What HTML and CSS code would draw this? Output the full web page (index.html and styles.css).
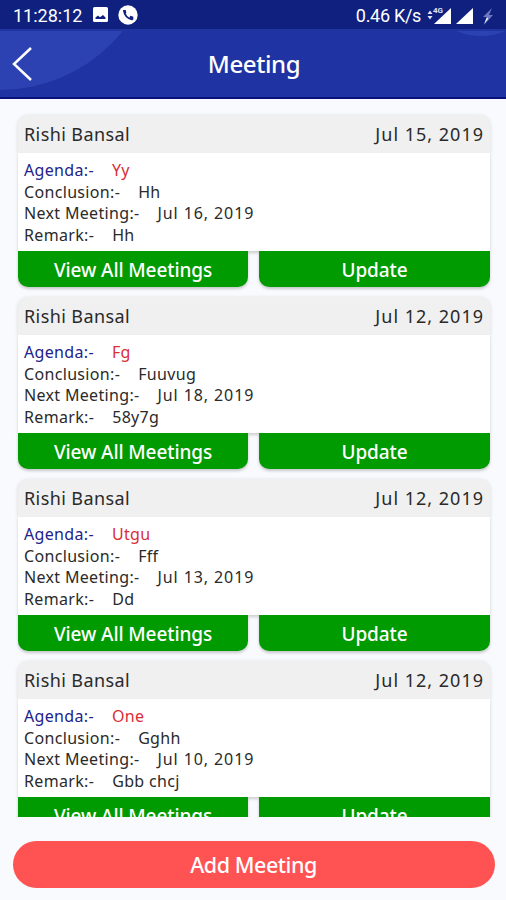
FILE: index.html
```
<!DOCTYPE html>
<html lang="en">
  <head>
    <meta charset="UTF-8" />
    <title>Meeting</title>
    <link rel="stylesheet" href="styles.css">
  </head>
  <body>
    <header>
      <svg class="header-bg" viewBox="0 0 506 99">
        <circle cx="0" cy="-67" r="157" />
        <circle cx="481" cy="-29" r="65" />
      </svg>
      <div class="status-bar">
        <span class="clock">11:28:12</span>
        <svg class="photo" width="15" height="15" viewBox="0 0 15 15">
          <rect width="15" height="15" rx="1.5" fill="#fff" />
          <path d="M2.500 12V10.500L5 8.500l2 1.800 3-2.300 2.500 2.500V12z" fill="#10207f" />
        </svg>
        <svg class="call" width="20" height="20" viewBox="0 0 20 20">
          <circle cx="10" cy="10" r="9.7" fill="#fff" />
          <path d="M6 5.2c.3 4.5 3.500 8.300 8.500 9.300" fill="none" stroke="#10207f" stroke-width="1.800" />
          <path d="M5 5h2.800l.5 3-2 1zM11.300 12.300l1.200-1.500 2.800 1v3h-2z" fill="#10207f" />
        </svg>
        <span class="speed">0.46 K/s</span>
        <svg class="signal" width="70" height="20" viewBox="0 0 70 20">
          <path d="M1.500 9 4 5.500 6.500 9zM1.500 11h5L4 14.500z" fill="#dfe3f6" />
          <path d="M25 3v16H8zM47 3v16H30z" fill="#fff" />
          <text x="7" y="8">4G</text>
          <path d="m66 3-9 9h4l-3 8 9-10h-4z" fill="#6d79c0" />
          <path d="m61 12-3 7 4-5z" fill="#fff" />
        </svg>
      </div>
      <div class="title-bar">
        <svg class="back" width="22" height="36" viewBox="0 0 22 36">
          <path d="M19 2 2 18l17 16" fill="none" stroke="#fff" stroke-width="2.500" />
        </svg>
        <h1>Meeting</h1>
      </div>
    </header>

    <div class="list">
      <div class="card">
        <div class="card-head"><span>Rishi Bansal</span><span class="date">Jul 15, 2019</span></div>
        <div class="card-body">
          <p class="agenda"><span class="label">Agenda:-</span><span>Yy</span></p>
          <p><span class="label">Conclusion:-</span><span>Hh</span></p>
          <p><span class="label">Next Meeting:-</span><span class="next">Jul 16, 2019</span></p>
          <p><span class="label">Remark:-</span><span>Hh</span></p>
        </div>
        <div class="actions"><button>View All Meetings</button><button>Update</button></div>
      </div>
      <div class="card">
        <div class="card-head"><span>Rishi Bansal</span><span class="date">Jul 12, 2019</span></div>
        <div class="card-body">
          <p class="agenda"><span class="label">Agenda:-</span><span>Fg</span></p>
          <p><span class="label">Conclusion:-</span><span>Fuuvug</span></p>
          <p><span class="label">Next Meeting:-</span><span class="next">Jul 18, 2019</span></p>
          <p><span class="label">Remark:-</span><span>58y7g</span></p>
        </div>
        <div class="actions"><button>View All Meetings</button><button>Update</button></div>
      </div>
      <div class="card">
        <div class="card-head"><span>Rishi Bansal</span><span class="date">Jul 12, 2019</span></div>
        <div class="card-body">
          <p class="agenda"><span class="label">Agenda:-</span><span>Utgu</span></p>
          <p><span class="label">Conclusion:-</span><span>Fff</span></p>
          <p><span class="label">Next Meeting:-</span><span class="next">Jul 13, 2019</span></p>
          <p><span class="label">Remark:-</span><span>Dd</span></p>
        </div>
        <div class="actions"><button>View All Meetings</button><button>Update</button></div>
      </div>
      <div class="card">
        <div class="card-head"><span>Rishi Bansal</span><span class="date">Jul 12, 2019</span></div>
        <div class="card-body">
          <p class="agenda"><span class="label">Agenda:-</span><span>One</span></p>
          <p><span class="label">Conclusion:-</span><span>Gghh</span></p>
          <p><span class="label">Next Meeting:-</span><span class="next">Jul 10, 2019</span></p>
          <p><span class="label">Remark:-</span><span>Gbb chcj</span></p>
        </div>
        <div class="actions"><button>View All Meetings</button><button>Update</button></div>
      </div>
    </div>

    <button class="add">Add Meeting</button>
  </body>
</html>
```
FILE: styles.css
```
* {
  box-sizing: border-box;
}
body {
  margin: 0;
  height: 900px;
  overflow: hidden;
  display: flex;
  flex-direction: column;
  background: #f9fafe;
  color: #2a2a2a;
  font-family: "Noto Sans", "Open Sans", sans-serif;
}
header {
  position: relative;
  height: 99px;
  background: #2033a2;
  border-bottom: 2px solid #07107c;
  color: white;
}
.header-bg {
  position: absolute;
  top: 0;
  left: 0;
  width: 506px;
  height: 99px;
  fill: #2d42b2;
}
.status-bar {
  position: relative;
  display: flex;
  align-items: center;
  height: 31px;
  padding: 0 10px 0 13px;
  background: #10207f;
  border-bottom: 2px solid #2034a0;
  font-family: Roboto, sans-serif;
  font-size: 18px;
}
.clock {
  width: 80px;
  padding-top: 2px;
}
.call {
  margin-left: 10px;
}
.speed {
  margin-left: auto;
  margin-right: 5px;
  padding-top: 2px;
  letter-spacing: -0.3px;
}
.signal text {
  font-size: 8px;
  font-weight: bold;
  fill: #dfe3f6;
}
.title-bar {
  position: relative;
  height: 66px;
}
.back {
  position: absolute;
  left: 12px;
  top: 15px;
}
h1 {
  margin: 0;
  padding-left: 2px;
  text-align: center;
  font-size: 24px;
  font-weight: 500;
  letter-spacing: -0.4px;
  line-height: 66px;
}
.list {
  height: 718px;
  padding: 16px 16px 0 18px;
  overflow: hidden;
}
.card {
  height: 172px;
  margin-bottom: 10px;
}
.card-head {
  display: flex;
  justify-content: space-between;
  height: 38px;
  padding: 0 6px;
  background: #f0f0f0;
  border-radius: 10px 10px 0 0;
  box-shadow: 0 1px 4px rgba(0, 0, 0, 0.14);
  font-size: 18px;
  letter-spacing: 0.4px;
  line-height: 39px;
}
.date {
  letter-spacing: 1px;
}
.card-body {
  position: relative;
  height: 98px;
  padding: 7px 6px 0;
  background: white;
  box-shadow: 0 2px 3px rgba(0, 0, 0, 0.18);
  font-size: 16px;
  letter-spacing: 0.33px;
}
.card-body p {
  display: flex;
  gap: 18px;
  margin: 0;
  line-height: 21.6px;
}
.agenda {
  color: #d92d38;
}
.agenda .label {
  color: #22228a;
}
.next {
  letter-spacing: 0.9px;
}
.actions {
  position: relative;
  display: grid;
  grid-template-columns: 230px 231px;
  gap: 11px;
}
button {
  height: 36px;
  padding: 1px 0 0;
  border: none;
  border-radius: 0 0 10px 10px;
  background: #009b00;
  box-shadow: 0 2px 3px rgba(0, 0, 0, 0.2);
  color: white;
  font-family: inherit;
  font-size: 19px;
  font-weight: 500;
  letter-spacing: -0.1px;
}
.add {
  width: 482px;
  height: 47px;
  margin: 24px 0 0 12.5px;
  padding: 0;
  border-radius: 24px;
  background: #ff5252;
  box-shadow: none;
  font-size: 21.5px;
  letter-spacing: -0.45px;
}
```
